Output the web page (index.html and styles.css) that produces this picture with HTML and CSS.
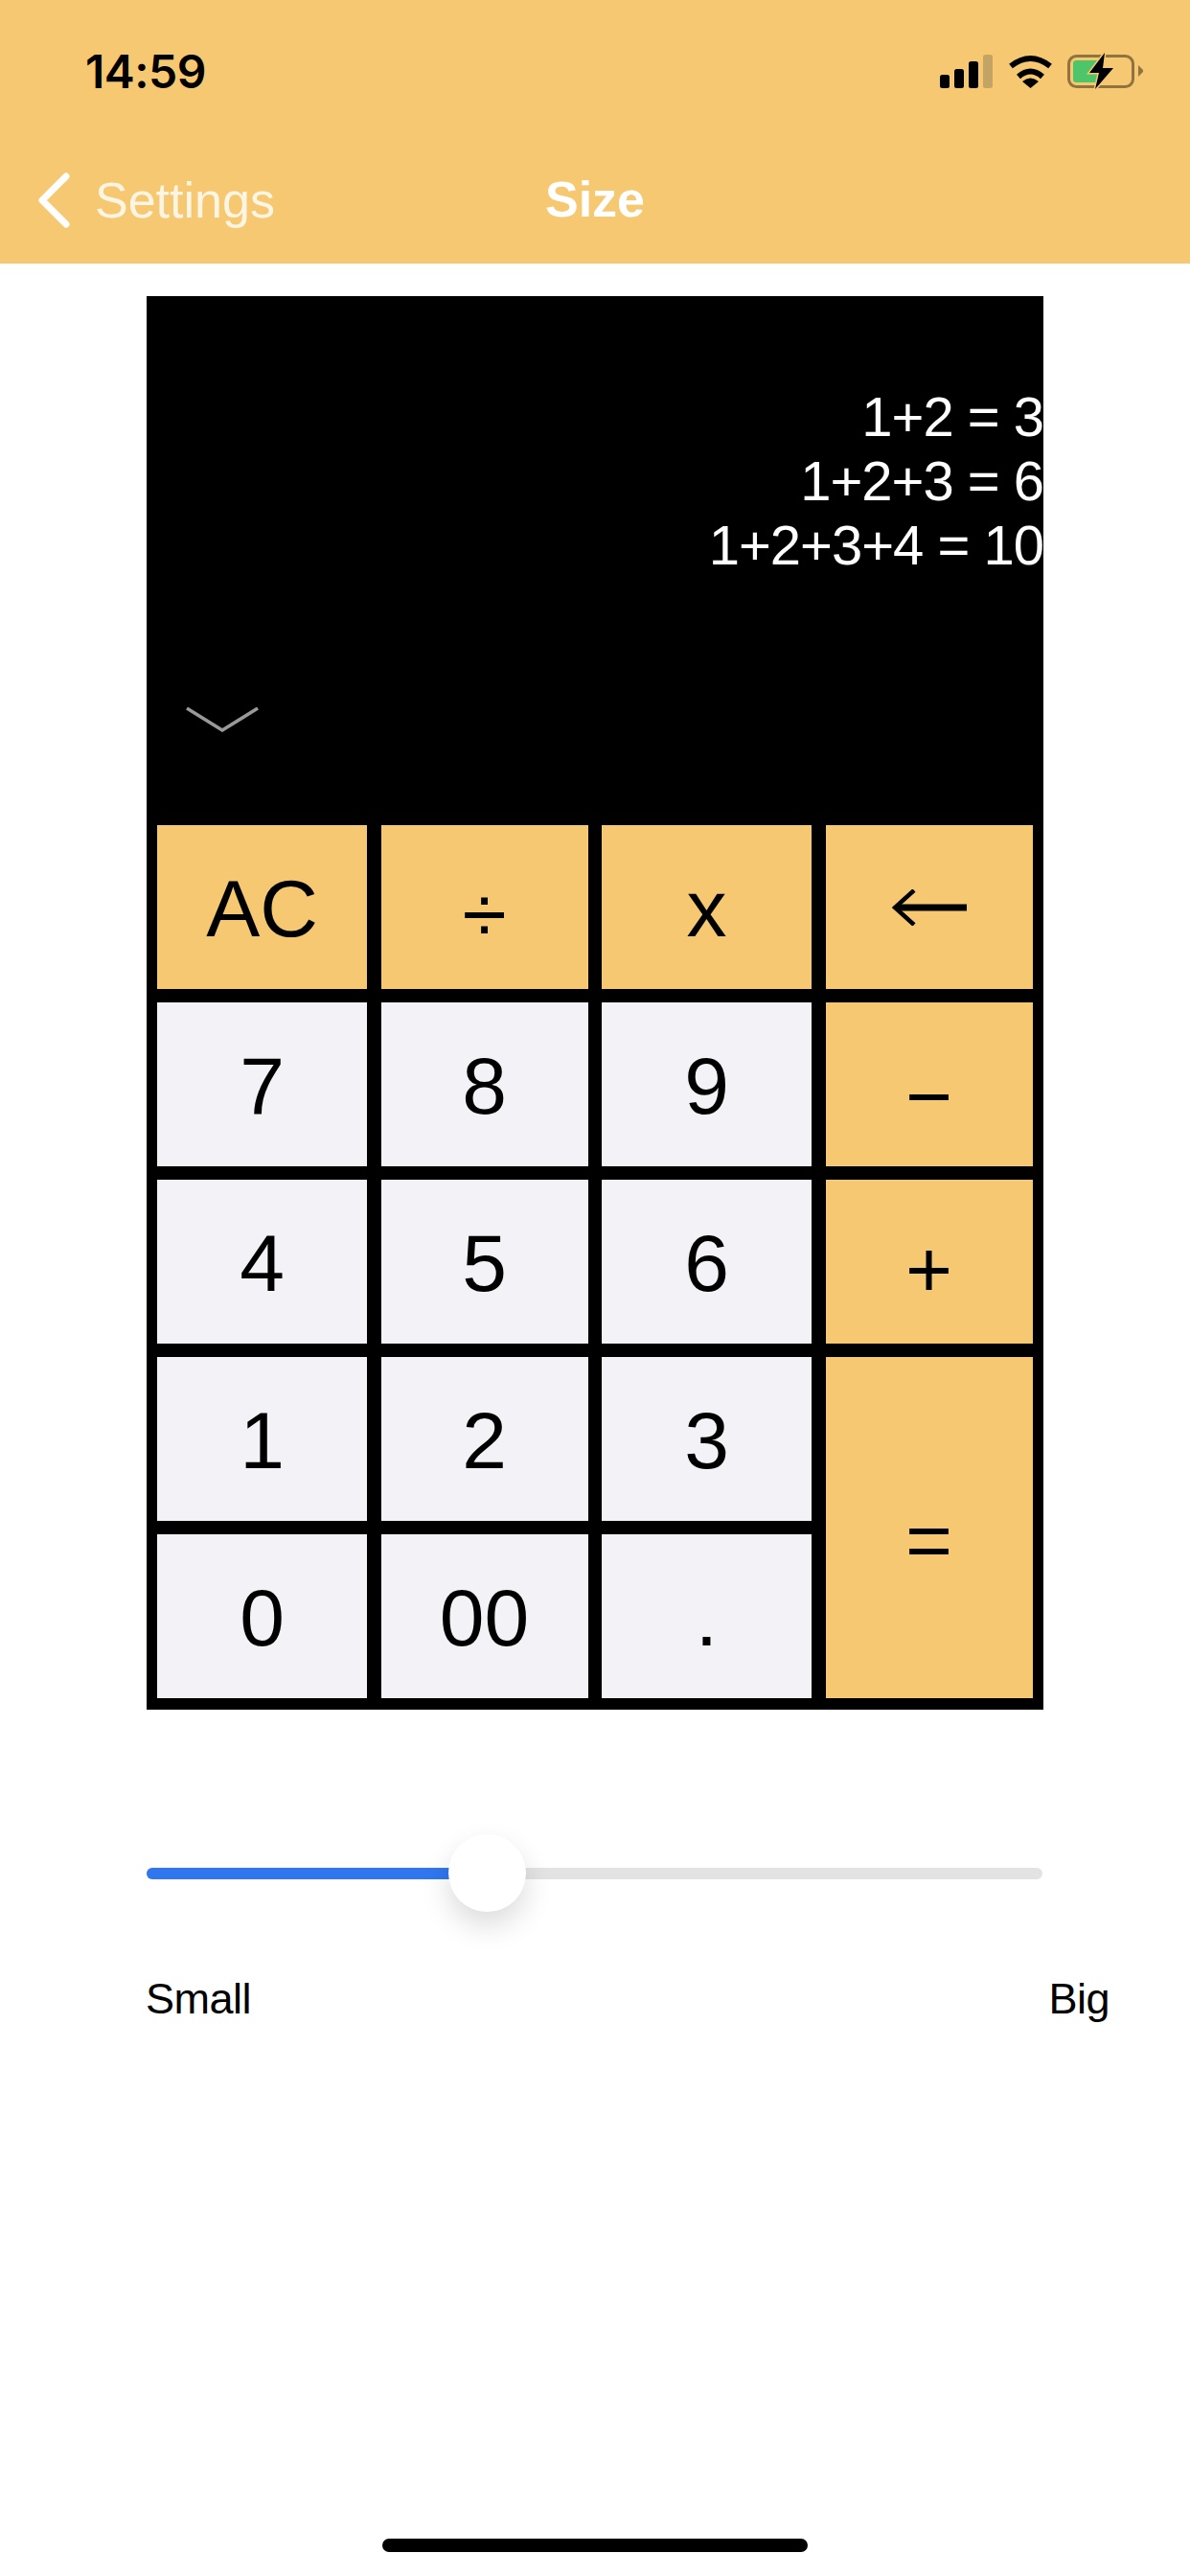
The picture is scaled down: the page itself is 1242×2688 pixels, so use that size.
FILE: index.html
```html
<!DOCTYPE html>
<html lang="en">
<head>
    <meta charset="UTF-8">
    <meta name="viewport" content="width=device-width, initial-scale=1.0">
    <title>Size</title>
    <link rel="stylesheet" href="styles.css">
</head>
<body>
    <header class="top">
        <div class="status">
            <span class="time">14:59</span>
            <div class="status-icons">
                <svg width="56" height="35" viewBox="0 0 56 35">
                    <rect x="0" y="21" width="10" height="14" rx="2.5" fill="#000"/>
                    <rect x="15" y="15" width="10" height="20" rx="2.5" fill="#000"/>
                    <rect x="30" y="7" width="10" height="28" rx="2.5" fill="#000"/>
                    <rect x="45" y="0" width="10" height="35" rx="2.5" fill="#c4a464"/>
                </svg>
                <svg width="47" height="35" viewBox="0 0 47 35">
                    <path d="M3 12 Q23.5 -4 44 12" fill="none" stroke="#000" stroke-width="6"/>
                    <path d="M11 23 Q23.5 12 36 23" fill="none" stroke="#000" stroke-width="6"/>
                    <path d="M15 28 Q23.5 21 32 28 L23.5 35 Z" fill="#000"/>
                </svg>
                <svg width="80" height="38" viewBox="0 0 80 38">
                    <rect x="1.5" y="3.5" width="67" height="32" rx="8" fill="none" stroke="#8f7440" stroke-width="3"/>
                    <rect x="6" y="8" width="28" height="23" rx="3" fill="#4fc56a"/>
                    <path d="M74 13 L79 18 L79 20 L74 25 Z" fill="#8f7440"/>
                    <path d="M39 0 L23 21 L33 21 L29 38 L48 16 L37 16 Z" fill="#000" stroke="#f5c871" stroke-width="3" paint-order="stroke"/>
                </svg>
            </div>
        </div>
        <nav class="navbar">
            <a class="back" href="#">
                <svg width="36" height="58" viewBox="0 0 36 58">
                    <path d="M31 4 L6 29 L31 54" fill="none" stroke="#fff" stroke-width="7" stroke-linecap="round" stroke-linejoin="round"/>
                </svg>
                <span>Settings</span>
            </a>
            <h1 class="title">Size</h1>
        </nav>
    </header>

    <main class="content">
        <div class="calc">
            <div class="display">
                <div class="history">
                    <div>1+2 = 3</div>
                    <div>1+2+3 = 6</div>
                    <div>1+2+3+4 = 10</div>
                </div>
                <svg class="collapse" width="76" height="26" viewBox="0 0 76 26">
                    <path d="M1 1 L38 24 L75 1" fill="none" stroke="#999" stroke-width="3.5"/>
                </svg>
            </div>
            <div class="keys">
                <button class="key op">AC</button>
                <button class="key op sym">÷</button>
                <button class="key op">x</button>
                <button class="key op arrow" aria-label="Backspace">
                    <svg width="78" height="38" viewBox="0 0 78 38">
                        <path d="M23 1 L3 19 L23 37" fill="none" stroke="#000" stroke-width="4.5"/>
                        <rect x="6" y="15.5" width="72" height="7" fill="#000"/>
                    </svg>
                </button>
                <button class="key">7</button>
                <button class="key">8</button>
                <button class="key">9</button>
                <button class="key op sym-low">−</button>
                <button class="key">4</button>
                <button class="key">5</button>
                <button class="key">6</button>
                <button class="key op sym">+</button>
                <button class="key">1</button>
                <button class="key">2</button>
                <button class="key">3</button>
                <button class="key op sym-low equals">=</button>
                <button class="key">0</button>
                <button class="key">00</button>
                <button class="key">.</button>
            </div>
        </div>

        <div class="slider">
            <div class="slider-fill"></div>
            <div class="slider-thumb"></div>
        </div>
        <div class="slider-labels">
            <span>Small</span>
            <span>Big</span>
        </div>
    </main>

    <div class="home-bar"></div>
</body>
</html>
```

FILE: styles.css
```css
* {
    box-sizing: border-box;
}
body {
    margin: 0;
    width: 1242px;
    height: 2688px;
    position: relative;
    background-color: #fff;
    font-family: "Liberation Sans", Arial, sans-serif;
    overflow: hidden;
}
.top {
    height: 275px;
    background-color: #f5c871;
}
.status {
    display: flex;
    justify-content: space-between;
    align-items: center;
    height: 148px;
    padding: 0 48px 0 89px;
}
.time {
    font-family: Inter, sans-serif;
    font-size: 48px;
    font-weight: 600;
    letter-spacing: -0.5px;
    color: #000;
}
.status-icons {
    display: flex;
    align-items: center;
    gap: 15px;
}
.navbar {
    position: relative;
    display: flex;
    align-items: center;
    height: 127px;
    padding: 0 0 6px 38px;
}
.back {
    display: flex;
    align-items: center;
    gap: 25px;
    color: #fdf5e4;
    font-size: 52px;
    text-decoration: none;
}
.title {
    position: absolute;
    left: 0;
    right: 0;
    top: 0;
    margin: 0;
    line-height: 121px;
    text-align: center;
    color: #fff;
    font-size: 52px;
    font-weight: bold;
}
.content {
    padding: 34px 0 0 153px;
}
.calc {
    width: 936px;
    background-color: #000;
}
.display {
    height: 552px;
    position: relative;
    overflow: hidden;
    color: #fff;
    font-size: 58px;
    letter-spacing: -1px;
    padding-top: 92px;
}
.history {
    text-align: right;
    line-height: 67px;
}
.collapse {
    position: absolute;
    left: 41px;
    top: 429px;
}
.keys {
    display: grid;
    grid-template-columns: 219px 216px 219px 216px;
    grid-auto-rows: 171px;
    gap: 14px 14.5px;
    padding: 0 11px 12px;
}
.key {
    display: flex;
    align-items: center;
    justify-content: center;
    border: none;
    padding: 4px 0 0;
    background-color: #f2f2f7;
    color: #000;
    font-family: inherit;
    font-size: 84px;
}
.op {
    background-color: #f5c871;
}
.sym {
    padding-top: 16px;
}
.sym-low {
    padding-top: 26px;
}
.arrow {
    padding: 0;
}
.equals {
    grid-column: 4;
    grid-row: 4 / span 2;
}
.slider {
    position: relative;
    width: 935px;
    height: 12px;
    margin-top: 165px;
    border-radius: 6px;
    background-color: #e3e3e3;
}
.slider-fill {
    width: 330px;
    height: 12px;
    border-radius: 6px;
    background-color: #2f76f0;
}
.slider-thumb {
    position: absolute;
    left: 315px;
    top: -35px;
    width: 81px;
    height: 81px;
    border-radius: 50%;
    background-color: #fff;
    box-shadow: 0 14px 30px rgba(0, 0, 0, 0.14);
}
.slider-labels {
    display: flex;
    justify-content: space-between;
    width: 1006px;
    margin: 99px 0 0 -1px;
    font-size: 45px;
    letter-spacing: -0.5px;
    color: #000;
}
.home-bar {
    position: absolute;
    left: 399px;
    top: 2649px;
    width: 444px;
    height: 14px;
    border-radius: 7px;
    background-color: #000;
}
```
